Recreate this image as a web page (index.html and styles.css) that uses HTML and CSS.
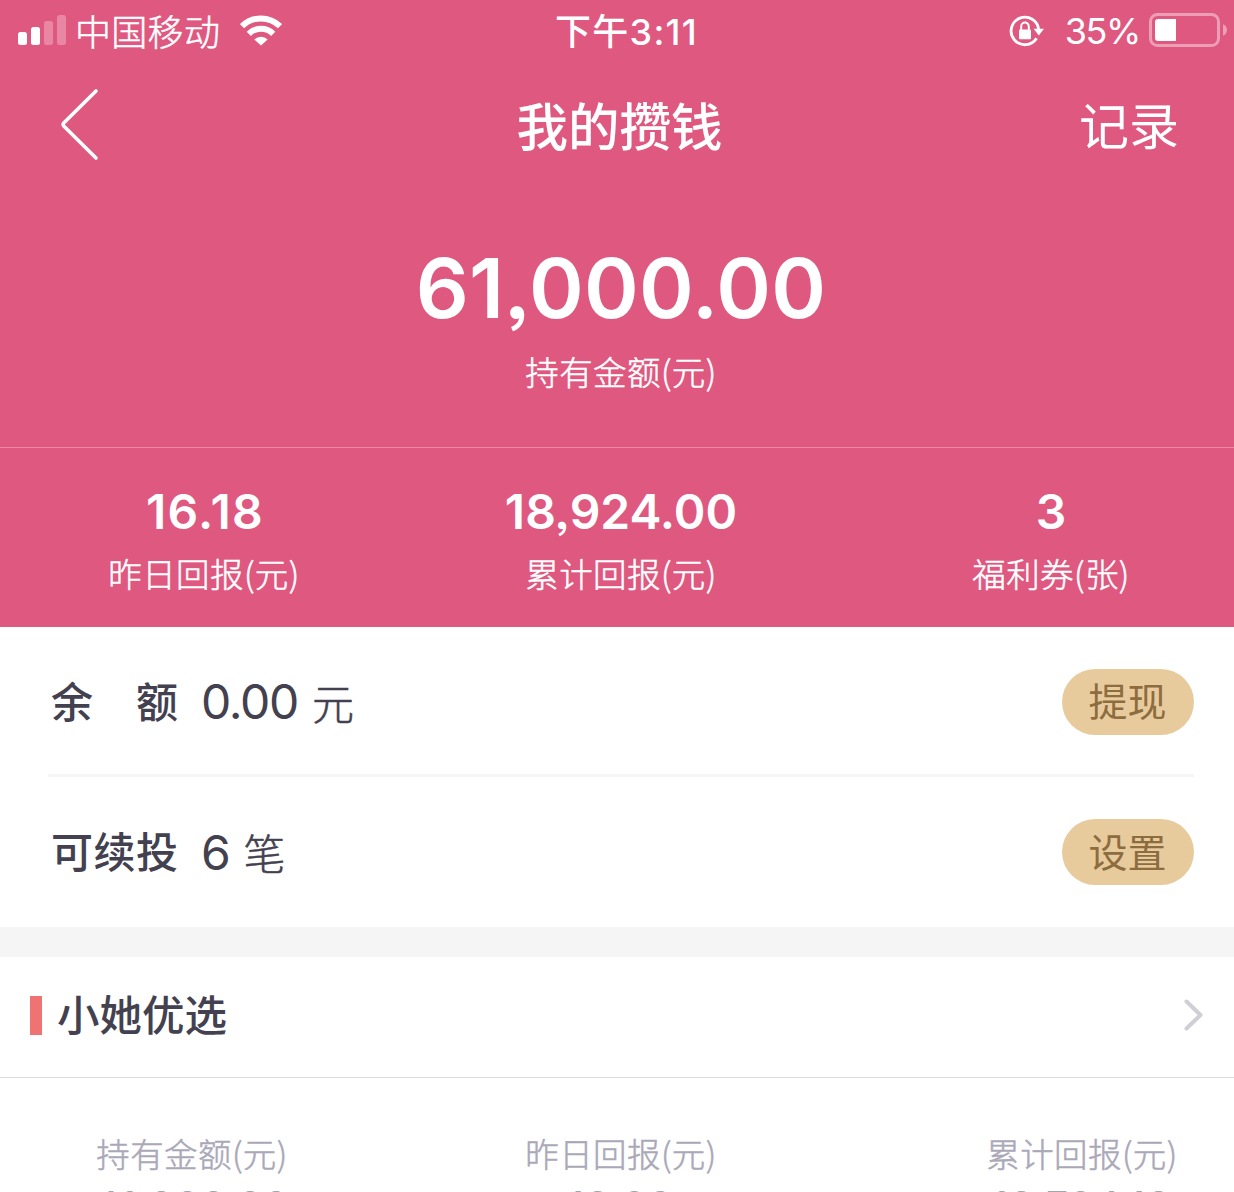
FILE: index.html
```html
<!DOCTYPE html>
<html lang="zh-CN">
<head>
<meta charset="utf-8">
<title>我的攒钱</title>
<link rel="stylesheet" href="styles.css">
</head>
<body>
<div class="page">
  <header class="hero">
    <div class="status">
      <div class="status-left">
        <svg class="signal" width="50" height="32" viewBox="0 0 50 32" fill="#fff">
          <rect x="0" y="18" width="9" height="13" rx="2.5"/>
          <rect x="13" y="13" width="9" height="18" rx="2.5"/>
          <rect x="26" y="7" width="9" height="24" rx="2.5" opacity=".28"/>
          <rect x="39" y="1" width="9" height="30" rx="2.5" opacity=".28"/>
        </svg>
        <span class="carrier">中国移动</span>
        <svg class="wifi" width="42" height="31" viewBox="0 0 42 31" fill="none" stroke="#fff" stroke-width="6">
          <path d="M2 11.2A27 27 0 0 1 40 11.2"/>
          <path d="M8.8 18.8A17.2 17.2 0 0 1 33.2 18.8"/>
          <path d="M14.3 24.4A9.5 9.5 0 0 1 27.7 24.4L21 30.6Z" fill="#fff" stroke="none"/>
        </svg>
      </div>
      <div class="time">下午3:11</div>
      <div class="status-right">
        <svg class="lock" width="36" height="32" viewBox="0 0 36 32">
          <path d="M29.7 15A13.8 13.8 0 1 0 27.6 23.3" fill="none" stroke="#fff" stroke-width="2.8"/>
          <path d="M24.6 13.8H35L29.8 20.6Z" fill="#fff"/>
          <rect x="10" y="14.6" width="12" height="9.6" rx="1" fill="#fff"/>
          <path d="M12.2 15V11.4A3.8 3.8 0 0 1 19.8 11.4V15" fill="none" stroke="#fff" stroke-width="2"/>
        </svg>
        <span class="percent">35%</span>
        <svg class="battery" width="78" height="34" viewBox="0 0 78 34">
          <rect x="1.5" y="1.5" width="68" height="31" rx="7" fill="none" stroke="#fff" stroke-width="3" opacity=".42"/>
          <path d="M9 6H27V28H9A3 3 0 0 1 6 25V9A3 3 0 0 1 9 6Z" fill="#fff"/>
          <path d="M74 11.2Q78 13 78 17T74 22.8Z" fill="#fff" opacity=".42"/>
        </svg>
      </div>
    </div>
    <nav class="nav">
      <svg class="back" width="40" height="74" viewBox="0 0 40 74" fill="none" stroke="#fff" stroke-width="3.6" stroke-linecap="round" stroke-linejoin="round"><path d="M36 3L3.7 35Q2.6 36.5 3.7 38L36 70"/></svg>
      <h1 class="title">我的攒钱</h1>
      <a class="record">记录</a>
    </nav>
    <div class="total">
      <div class="total-value">61,000.00</div>
      <div class="label">持有金额(元)</div>
    </div>
    <div class="stats">
      <div><div class="stat-value wide">16.18</div><div class="label">昨日回报(元)</div></div>
      <div><div class="stat-value">18,924.00</div><div class="label">累计回报(元)</div></div>
      <div><div class="stat-value">3</div><div class="label">福利券(张)</div></div>
    </div>
  </header>
  <section class="rows">
    <div class="row">
      <span class="row-name"><span>余</span><span>额</span></span>
      <span class="row-value">0.00</span><span class="unit">元</span>
      <button class="pill">提现</button>
    </div>
    <div class="row">
      <span class="row-name"><span>可</span><span>续</span><span>投</span></span>
      <span class="row-value">6</span><span class="unit">笔</span>
      <button class="pill">设置</button>
    </div>
  </section>
  <section class="picks">
    <div class="picks-head">
      <i class="mark"></i>
      <h2 class="picks-title">小她优选</h2>
      <svg class="more" width="22" height="36" viewBox="0 0 22 36" fill="none" stroke="#d0cfd6" stroke-width="4" stroke-linecap="round" stroke-linejoin="round"><path d="M4.5 4.5L18.5 18L4.5 31.5"/></svg>
    </div>
    <div class="picks-cols">
      <div><div class="label">持有金额(元)</div><div class="pick-value">41,000.00</div></div>
      <div><div class="label">昨日回报(元)</div><div class="pick-value">18.98</div></div>
      <div><div class="label">累计回报(元)</div><div class="pick-value">18,794.18</div></div>
    </div>
  </section>
</div>
</body>
</html>
```
FILE: styles.css
```css
* { box-sizing: border-box; }
html, body { margin: 0; }
body {
  width: 1234px;
  height: 1192px;
  overflow: hidden;
  background: #fff;
  color: #43414f;
  font-family: "Noto Sans CJK SC", sans-serif;
}
h1, h2 { margin: 0; font-weight: 400; }
svg { display: block; flex: none; }

.hero { height: 627px; background: #df5880; color: #fff; }

.status {
  display: grid;
  grid-template-columns: 1fr auto 1fr;
  align-items: center;
  height: 60px;
  padding: 0 7px 0 18px;
}
.status-left, .status-right { display: flex; align-items: center; height: 60px; }
.status-right { justify-content: flex-end; }
.signal, .wifi, .battery { margin-bottom: 2px; }
.carrier {
  margin-left: 7px;
  font-size: 36px;
  line-height: 54px;
  padding-bottom: 2px;
  font-weight: 300;
  letter-spacing: 0.3px;
  -webkit-text-stroke: 0.5px currentColor;
}
.wifi { margin-left: 20px; }
.time {
  margin-left: 8px;
  padding-top: 2px;
  font-family: Inter, "Noto Sans CJK SC", sans-serif;
  font-size: 36px;
  line-height: 60px;
  font-weight: 500;
  letter-spacing: 1.3px;
}
.lock { margin-bottom: 1px; }
.percent { margin: 0 9px 0 20px; font: 400 36px/60px Inter, sans-serif; letter-spacing: -1.4px; }

.nav {
  display: grid;
  grid-template-columns: 1fr auto 1fr;
  align-items: center;
  height: 130px;
  padding: 0 55px 0 60px;
}
.title { font-size: 51.5px; line-height: 124px; padding-bottom: 2px; font-weight: 500; }
.record { justify-self: end; font-size: 50px; line-height: 124px; padding-bottom: 4px; font-weight: 400; }

.total { height: 258px; padding: 48px 0 0 8px; border-bottom: 1px solid #e889a5; text-align: center; }
.total-value { font: 600 83px/100px Inter, sans-serif; letter-spacing: 0.3px; font-feature-settings: "ss03"; }
.label {
  font-size: 33.5px;
  line-height: 50px;
  font-weight: 300;
  letter-spacing: 0.4px;
  -webkit-text-stroke: 0.5px currentColor;
}
.total .label { margin-top: 8px; }

.stats { display: grid; grid-template-columns: 408px 426px 400px; padding-top: 34px; text-align: center; }
.stats > :last-child { padding-left: 34px; }
.stat-value { font: 600 48px/60px Inter, sans-serif; font-feature-settings: "ss03"; }
.stat-value.wide { padding-left: 2px; letter-spacing: 1.3px; }
.stats .label { margin-top: 6px; }

.rows { padding: 0 40px 0 48px; border-bottom: 30px solid #f5f5f5; height: 330px; }
.row { display: flex; align-items: center; height: 150px; padding-left: 3px; }
.row:first-child { padding-top: 2px; border-bottom: 3px solid #f6f6f6; }
.row-name {
  display: flex;
  justify-content: space-between;
  width: 127px;
  padding-bottom: 4px;
  font-size: 42px;
  line-height: 60px;
  font-weight: 500;
}
.row-value { margin: 1px 0 0 23px; font: 400 48px/60px Inter, sans-serif; letter-spacing: -1.3px; }
.unit {
  margin-left: 14px;
  font-size: 42px;
  line-height: 60px;
  font-weight: 300;
  -webkit-text-stroke: 0.5px currentColor;
}
.pill {
  width: 132px;
  height: 66px;
  margin-left: auto;
  padding: 0 1px 5px 0;
  border: 0;
  border-radius: 33px;
  background: #e8cb9c;
  color: #8d6d40;
  font: 400 39px/58px "Noto Sans CJK SC", sans-serif;
}

.picks-head { display: flex; align-items: center; height: 121px; padding: 0 30px 4px 30px; border-bottom: 1px solid #dcdce0; }
.mark { width: 12px; height: 39px; background: #f07373; }
.picks-title { margin-left: 15px; padding-bottom: 4px; font-size: 42.5px; line-height: 60px; font-weight: 500; }
.more { margin-left: auto; }
.picks-cols { display: grid; grid-template-columns: 384px 474px 376px; height: 114px; padding-top: 50px; overflow: hidden; text-align: center; color: #aaa8b8; }
.picks-cols > :last-child { padding-left: 72px; }
.pick-value { margin-top: -1px; font: 400 39px/58px Inter, sans-serif; letter-spacing: 1.4px; color: #a5a3ae; }
```
